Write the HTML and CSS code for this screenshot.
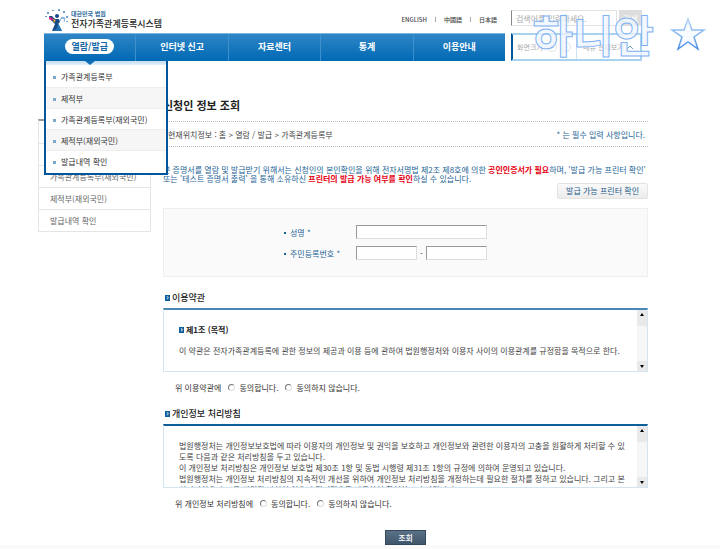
FILE: index.html
```html
<!DOCTYPE html>
<html lang="ko">
<head>
    <meta charset="UTF-8">
    <meta name="viewport" content="width=device-width, initial-scale=1.0">
    <title>전자가족관계등록시스템</title>
    <link rel="stylesheet" href="styles.css">
</head>
<body>
    <div class="page">
        <header class="header">
            <div class="header-main">
                <div class="top">
                    <a href="#" class="logo">
                        <svg width="26" height="25" viewBox="0 0 26 25" aria-hidden="true">
                            <g fill="#6a9cc9">
                                <rect x="1" y="9" width="2" height="1"/>
                                <rect x="3" y="5" width="2" height="2"/>
                                <rect x="8" y="3" width="2" height="1"/>
                                <rect x="14" y="2" width="2" height="2"/>
                                <rect x="19" y="4" width="2" height="2"/>
                                <rect x="22" y="9" width="2" height="2"/>
                                <rect x="22" y="14" width="2" height="1"/>
                            </g>
                            <path d="M5 9l3 0 3 3 4 0 1 3-2 2 4 7H8l3-7-5-5z" fill="#174a86"/>
                            <path d="M8 24c5-1 6-4 6-8l4 8z" fill="#2474b5"/>
                            <circle cx="13" cy="9" r="2" fill="#174a86"/>
                            <path d="M5 10l4 1-1 3-3-2z" fill="#d9298a"/>
                            <path d="M9 12l3 1-2 3z" fill="#f0a030"/>
                            <path d="M16 14l2-4 3 1-1 4M17 11l4 1" fill="none" stroke="#7fb0d9"/>
                        </svg>
                        <span class="logo-text">
                            <small>대한민국 법원</small>
                            <strong>전자가족관계등록시스템</strong>
                        </span>
                    </a>
                    <div class="langs">
                        <a href="#">ENGLISH</a>
                        <a href="#">中國語</a>
                        <a href="#">日本語</a>
                    </div>
                </div>
                <nav class="nav">
                    <div class="nav-item active">
                        <a href="#"><span>열람/발급</span></a>
                        <ul class="dropdown">
                            <li><a href="#">가족관계등록부</a></li>
                            <li><a href="#">제적부</a></li>
                            <li><a href="#">가족관계등록부(재외국민)</a></li>
                            <li><a href="#">제적부(재외국민)</a></li>
                            <li><a href="#">발급내역 확인</a></li>
                        </ul>
                    </div>
                    <div class="nav-item"><a href="#">인터넷 신고</a></div>
                    <div class="nav-item"><a href="#">자료센터</a></div>
                    <div class="nav-item"><a href="#">통계</a></div>
                    <div class="nav-item"><a href="#">이용안내</a></div>
                </nav>
            </div>
            <div class="header-side">
                <form class="search">
                    <input type="text" placeholder="검색어를 입력하세요." aria-label="검색어">
                    <button type="button">검색</button>
                </form>
                <div class="tools">
                    <div class="zoom">
                        <span>화면크기</span>
                        <button type="button" aria-label="확대">+</button>
                        <button type="button" aria-label="축소">-</button>
                    </div>
                    <a href="#">메뉴 전체보기
                        <svg width="8" height="5" viewBox="0 0 8 5" aria-hidden="true"><path d="M1 4l3-3 3 3" fill="none" stroke="#6d9fc2"/></svg>
                    </a>
                </div>
            </div>
            <div class="watermark">
                <span>하니안</span>
                <svg width="36" height="34" viewBox="0 0 36 34" aria-hidden="true">
                    <defs>
                        <linearGradient id="star" x1="0" y1="0" x2="0" y2="1">
                            <stop offset="0" stop-color="#b5d3fa"/>
                            <stop offset="1" stop-color="#4f92e8"/>
                        </linearGradient>
                    </defs>
                    <path d="M18 2l4 11h12l-10 7 4 12-10-7-10 7 4-12L2 13h12z" fill="#f7fafe" stroke="url(#star)" stroke-width="1.5"/>
                </svg>
            </div>
        </header>

        <div class="content">
            <aside class="sidebar">
                <ul>
                    <li><a href="#">가족관계등록부</a></li>
                    <li><a href="#">제적부</a></li>
                    <li><a href="#">가족관계등록부(재외국민)</a></li>
                    <li><a href="#">제적부(재외국민)</a></li>
                    <li><a href="#">발급내역 확인</a></li>
                </ul>
            </aside>

            <main class="main">
                <h1>신청인 정보 조회</h1>
                <div class="location">
                    <span>현재위치정보 : 홈 &gt; 열람 / 발급 &gt; 가족관계등록부</span>
                    <span class="required">* 는 필수 입력 사항입니다.</span>
                </div>

                <p class="notice">본 증명서를 열람 및 발급받기 위해서는 신청인의 본인확인을 위해 전자서명법 제2조 제8호에 의한 <b>공인인증서가 필요</b>하며, '발급 가능 프린터 확인'<br>또는 '테스트 증명서 출력' 을 통해 소유하신 <b>프린터의 발급 가능 여부를 확인</b>하실 수 있습니다.</p>
                <button type="button" class="btn-printer">발급 가능 프린터 확인</button>

                <form class="applicant">
                    <div class="field">
                        <label for="name">성명 *</label>
                        <input type="text" id="name" class="wide">
                    </div>
                    <div class="field">
                        <label for="rrn1">주민등록번호 *</label>
                        <input type="text" id="rrn1">
                        <span>-</span>
                        <input type="text" aria-label="주민등록번호 뒷자리">
                    </div>
                </form>

                <section class="terms">
                    <h2>이용약관</h2>
                    <div class="terms-box">
                        <div class="terms-text">
                            <h3>제1조 (목적)</h3>
                            <p>이 약관은 전자가족관계등록에 관한 정보의 제공과 이용 등에 관하여 법원행정처와 이용자 사이의 이용관계를 규정함을 목적으로 한다.</p>
                        </div>
                        <div class="scroll">
                            <button type="button" class="up" aria-label="위로"></button>
                            <button type="button" class="down" aria-label="아래로"></button>
                        </div>
                    </div>
                    <div class="agree">
                        <span>위 이용약관에</span>
                        <label><input type="radio" name="terms">동의합니다.</label>
                        <label><input type="radio" name="terms">동의하지 않습니다.</label>
                    </div>
                </section>

                <section class="terms privacy">
                    <h2>개인정보 처리방침</h2>
                    <div class="terms-box">
                        <div class="terms-text">
                            <p>법원행정처는 개인정보보호법에 따라 이용자의 개인정보 및 권익을 보호하고 개인정보와 관련한 이용자의 고충을 원활하게 처리할 수 있도록 다음과 같은 처리방침을 두고 있습니다.</p>
                            <p>이 개인정보 처리방침은 개인정보 보호법 제30조 1항 및 동법 시행령 제31조 1항의 규정에 의하여 운영되고 있습니다.</p>
                            <p>법원행정처는 개인정보 처리방침의 지속적인 개선을 위하여 개인정보 처리방침을 개정하는데 필요한 절차를 정하고 있습니다. 그리고 본 처리방침은 수시로 변경될 방침이 있으니 정기적으로 방문하여 확인하시기 바랍니다.</p>
                        </div>
                        <div class="scroll">
                            <button type="button" class="up" aria-label="위로"></button>
                            <button type="button" class="down" aria-label="아래로"></button>
                        </div>
                    </div>
                    <div class="agree">
                        <span>위 개인정보 처리방침에</span>
                        <label><input type="radio" name="privacy">동의합니다.</label>
                        <label><input type="radio" name="privacy">동의하지 않습니다.</label>
                    </div>
                </section>

                <button type="button" class="btn-submit">조회</button>
            </main>
        </div>
    </div>
    <footer class="footer"></footer>
</body>
</html>
```

FILE: styles.css
```css
* { box-sizing: border-box; }
body {
    margin: 0;
    background: #fff;
    color: #444;
    font-family: "Noto Sans CJK KR", sans-serif;
    font-size: 8px;
    line-height: 11px;
}
h1, h2, h3, p, ul { margin: 0; padding: 0; }
ul { list-style: none; }
a { color: inherit; text-decoration: none; }
button, input { font: inherit; color: inherit; margin: 0; }
button { padding: 0; border: 0; cursor: pointer; }
.page { padding: 5px 72px 0 38px; }

/* header */
.header {
    position: relative;
    display: flex;
    gap: 6px;
    padding: 0 6px;
}
.header-main { flex: 1; }
.top {
    display: flex;
    justify-content: space-between;
    align-items: center;
    height: 28px;
    padding-right: 8px;
}
.logo { display: flex; gap: 1px; }
.logo-text {
    display: flex;
    flex-direction: column;
    padding-top: 3px;
}
.logo-text small { font-size: 6px; line-height: 8px; font-weight: 700; color: #2d6a9c; }
.logo-text strong { font-size: 9px; line-height: 12px; font-weight: 500; color: #222; }
.langs { display: flex; font-size: 6px; font-weight: 500; }
.langs a + a { margin-left: 8px; padding-left: 9px; background: linear-gradient(#aaa, #aaa) 0 3px / 1px 5px no-repeat; }
.nav {
    display: flex;
    height: 28px;
    border-top: 1px solid #7db5dc;
    background: linear-gradient(#2f86c6, #0069b4);
}
.nav-item {
    position: relative;
    flex: 1;
    border-left: 1px solid #3d91cd;
    color: #fff;
    font-size: 9px;
    font-weight: 700;
    line-height: 26px;
    text-align: center;
}
.nav-item:first-child { border-left: 0; }
.nav-item.active span {
    display: inline-block;
    padding: 0 6px;
    border-radius: 8px;
    background: #fff;
    color: #1467a6;
    line-height: 15px;
}
.dropdown {
    position: absolute;
    z-index: 2;
    top: 27px;
    left: 0;
    width: 124px;
    padding: 5px 0 2px;
    border: 2px solid #00569a;
    border-top: 0;
    background: #fff linear-gradient(#c5dff1, #e2eff8) 0 0 / 100% 4px no-repeat;
    color: #333;
    font-size: 8px;
    font-weight: 400;
    text-align: left;
}
.dropdown::before {
    content: "";
    position: absolute;
    top: 0;
    left: 39px;
    border: 5px solid transparent;
    border-top: 4px solid #1170b6;
    border-bottom: 0;
}
.dropdown li { line-height: 21px; border-top: 1px solid #eee; height: 21px; }
.dropdown li:first-child { border-top: 0; }
.dropdown li:nth-child(even) { background: #f6f6f6; }
.dropdown a::before {
    content: "";
    display: inline-block;
    width: 3px;
    height: 3px;
    margin: 0 5px 1px 7px;
    background: #79aac8;
}

.header-side { width: 131px; color: #aaa; }
.search { display: flex; gap: 2px; padding: 5px 0 7px; }
.search input {
    flex: 1;
    min-width: 0;
    height: 16px;
    padding: 0 4px;
    border: 1px solid #e2e2e2;
    border-left-color: #888;
    background: #fff;
}
.search input::placeholder { color: #aaa; opacity: 1; }
.search button { width: 23px; background: #ddd; color: #fff; }
.tools {
    display: flex;
    height: 28px;
    border: 2px solid #a8d2ee;
    border-left-color: #00569a;
    font-size: 7px;
    line-height: 24px;
}
.zoom { display: flex; align-items: center; gap: 4px; padding: 0 5px 0 4px; border-right: 1px solid #cfe3f1; }
.zoom button {
    width: 10px;
    height: 10px;
    border: 1px solid #e4e4e4;
    border-radius: 5px;
    background: #fff;
    color: #7aaed4;
    line-height: 7px;
}
.tools a { flex: 1; text-align: center; white-space: nowrap; }
.watermark {
    position: absolute;
    z-index: 3;
    top: 8px;
    right: -58px;
    display: flex;
    align-items: center;
    gap: 16px;
    pointer-events: none;
}
.watermark span {
    color: rgba(240, 247, 255, 0.8);
    font-size: 44px;
    font-weight: 700;
    line-height: 42px;
    -webkit-text-stroke: 1px #7fb2f2;
}

/* content */
.content { display: flex; gap: 12px; }
.sidebar { width: 113px; padding-top: 58px; }
.sidebar ul { border: 1px solid #e5e5e5; border-top: 2px solid #999; }
.sidebar li { height: 22px; padding-left: 11px; line-height: 22px; color: #666; }
.sidebar li + li { border-top: 1px solid #e5e5e5; }
.main { flex: 1; padding-top: 37px; }
h1 {
    height: 23px;
    color: #222;
    font-size: 11px;
    font-weight: 700;
    line-height: 15px;
}
.location {
    display: flex;
    justify-content: space-between;
    padding: 2px 3px 0 5px;
    border-top: 1px dotted #bbb;
    border-bottom: 1px dotted #bbb;
    line-height: 22px;
}
.required { color: #1d6496; }
.notice {
    margin-top: 18px;
    color: #1d6496;
    line-height: 9px;
    white-space: nowrap;
}
.notice b { color: #e60012; }
.btn-printer {
    display: block;
    height: 16px;
    margin: 0 0 9px auto;
    padding: 0 8px;
    border: 1px solid #e3e3e3;
    border-radius: 2px;
    background: linear-gradient(#fafafa, #ececec);
    color: #1d5c8b;
    line-height: 14px;
}
.applicant {
    display: flex;
    flex-direction: column;
    gap: 7px;
    height: 69px;
    padding: 16px 0 0 120px;
    border: 1px solid #efefef;
    background: #fafafa;
}
.field { display: flex; align-items: center; gap: 3px; }
.field label { width: 69px; color: #1d6496; }
.field label::before {
    content: "";
    display: inline-block;
    width: 2px;
    height: 2px;
    margin-right: 4px;
    background: #1d6496;
    vertical-align: middle;
}
.field input {
    width: 61px;
    height: 14px;
    border: 1px solid #ddd;
    border-top-color: #999;
    border-left-color: #999;
    background: #fff;
}
.field .wide { width: 131px; }

.terms { padding-top: 13px; }
h2 {
    padding: 0 0 2px 2px;
    color: #222;
    font-size: 9px;
    font-weight: 500;
    line-height: 16px;
}
h2::before, h3::before {
    content: "›";
    display: inline-block;
    width: 5px;
    height: 6px;
    margin-right: 2px;
    background: #0f5e9c;
    color: #fff;
    font-size: 8px;
    line-height: 4px;
    text-align: center;
    vertical-align: 1px;
}
.terms-box {
    display: flex;
    height: 64px;
    border: 1px solid #d3e5f0;
    border-top: 2px solid #4a87b5;
}
.privacy .terms-box { border-top-color: #0f5e9c; }
.terms-text {
    flex: 1;
    min-width: 0;
    overflow: hidden;
    padding: 14px 10px 0 15px;
    word-break: break-all;
}
.terms-text h3 { margin-bottom: 10px; color: #222; font-size: 8px; }
.scroll {
    display: flex;
    flex-direction: column;
    justify-content: space-between;
    width: 10px;
    background: #f6f6f6;
}
.scroll button {
    display: flex;
    justify-content: center;
    align-items: flex-start;
    background: #e9e9e9;
}
.scroll .up { height: 16px; padding-top: 3px; }
.scroll .down { height: 10px; padding-top: 4px; }
.scroll button::before { content: ""; border: 2px solid transparent; }
.scroll .up::before { border-top: 0; border-bottom: 3px solid #000; }
.scroll .down::before { border-bottom: 0; border-top: 3px solid #000; }
.agree { display: flex; gap: 7px; padding: 10px 12px 0; color: #333; }
.agree label { display: flex; align-items: center; gap: 4px; }
.agree input {
    appearance: none;
    width: 7px;
    height: 7px;
    border: 1px solid #ddd;
    border-top-color: #777;
    border-left-color: #777;
    border-radius: 50%;
}
.agree input:checked { background: #333; }
.btn-submit {
    display: block;
    width: 41px;
    height: 15px;
    margin: 21px auto 0;
    border: 1px solid #34495c;
    background: linear-gradient(#5a7186, #3f566b);
    color: #fff;
    font-weight: 500;
    line-height: 13px;
}
.footer { height: 4px; background: #fafafa; }
```
